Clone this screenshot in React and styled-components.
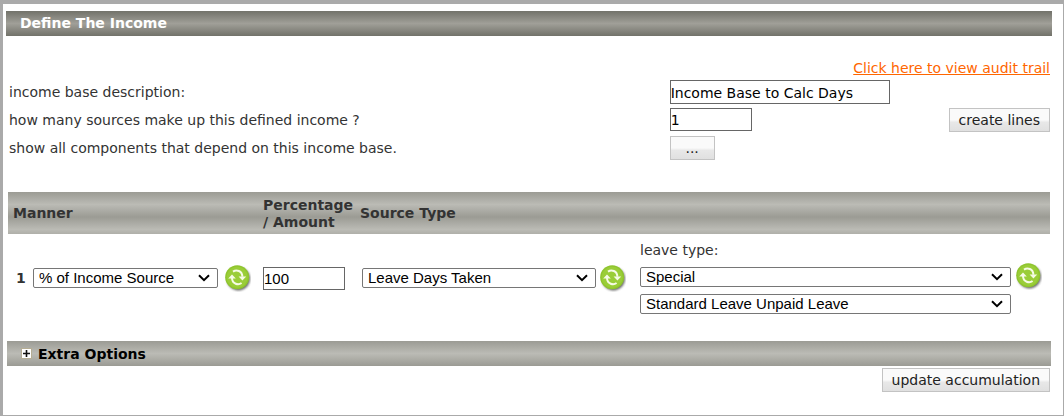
import React, { useState } from 'react'
import styled, { createGlobalStyle, css } from 'styled-components'

function RefreshButton({ label }) {
  return (
    <IconButton type="button" aria-label={label}>
      <svg width="26" height="27" viewBox="0 0 26 27" aria-hidden="true">
        <defs>
          <filter id="iconShadow" x="-20%" y="-20%" width="150%" height="150%">
            <feGaussianBlur stdDeviation="0.8" />
          </filter>
        </defs>
        <circle cx="13.4" cy="13.8" r="11.6" fill="#444" opacity="0.8" filter="url(#iconShadow)" />
        <circle cx="12.2" cy="12.3" r="12" fill="#8fc52e" />
        <circle cx="12.2" cy="12.3" r="10.6" fill="#9acd38" />
        <g fill="none" stroke="#f6fbe6" strokeWidth="2">
          <path d="M8 6.6C11.4 4.2 17.2 5.6 17.4 11.8" />
          <path d="M16.6 18C13.4 20.4 7.2 19.2 7 13" />
        </g>
        <path d="M13.6 11.4H21.2L17.4 15.4Z" fill="#f6fbe6" />
        <path d="M3.2 13.4H10.8L7 9.4Z" fill="#f6fbe6" />
      </svg>
    </IconButton>
  )
}

export default function App() {
  const [description, setDescription] = useState('Income Base to Calc Days')
  const [sources, setSources] = useState('1')
  const [amount, setAmount] = useState('100')

  return (
    <>
      <GlobalStyle />
      <Page>
        <TitleBar>Define The Income</TitleBar>

        <Content>
          <AuditRow>
            <AuditLink href="#audit">Click here to view audit trail</AuditLink>
          </AuditRow>

          <FormRow>
            <FormLabel htmlFor="description">income base description:</FormLabel>
            <TextInput
              id="description"
              $width="220px"
              $tall
              value={description}
              onChange={(e) => setDescription(e.target.value)}
            />
          </FormRow>
          <FormRow>
            <FormLabel htmlFor="sources">how many sources make up this defined income ?</FormLabel>
            <TextInput id="sources" value={sources} onChange={(e) => setSources(e.target.value)} />
            <Button type="button">create lines</Button>
          </FormRow>
          <FormRow>
            <FormLabel htmlFor="dependents">show all components that depend on this income base.</FormLabel>
            <Button id="dependents" type="button" $small>...</Button>
          </FormRow>

          <SourceTable>
            <colgroup>
              <Column $width="255px" />
              <Column $width="97px" />
              <Column $width="280px" />
              <Column />
            </colgroup>
            <thead>
              <tr>
                <HeadCell $first>Manner</HeadCell>
                <HeadCell>Percentage / Amount</HeadCell>
                <HeadCell>Source Type</HeadCell>
                <HeadCell />
              </tr>
            </thead>
            <tbody>
              <tr>
                <Cell>
                  <MannerLine>
                    <LineNumber>1</LineNumber>
                    <Select aria-label="Manner">
                      <option>% of Income Source</option>
                    </Select>
                    <RefreshButton label="Refresh manner" />
                  </MannerLine>
                </Cell>
                <Cell>
                  <TextInput
                    aria-label="Percentage / Amount"
                    $arial
                    value={amount}
                    onChange={(e) => setAmount(e.target.value)}
                  />
                </Cell>
                <Cell>
                  <SourceLine>
                    <Select aria-label="Source Type">
                      <option>Leave Days Taken</option>
                    </Select>
                    <RefreshButton label="Refresh source type" />
                  </SourceLine>
                </Cell>
                <Cell>
                  <LeaveGrid>
                    <LeaveLabel htmlFor="leaveType">leave type:</LeaveLabel>
                    <Select id="leaveType">
                      <option>Special</option>
                    </Select>
                    <RefreshButton label="Refresh leave type" />
                    <Select aria-label="Leave">
                      <option>Standard Leave Unpaid Leave</option>
                    </Select>
                  </LeaveGrid>
                </Cell>
              </tr>
            </tbody>
          </SourceTable>
        </Content>

        <Extra>
          <ExtraBar type="button">
            <Plus width="11" height="11" viewBox="0 0 11 11" aria-hidden="true">
              <rect x="0.5" y="0.5" width="10" height="10" fill="#fff" stroke="#b5ad94" />
              <path d="M2 5.5H9M5.5 2V9" stroke="#111" strokeWidth="1.6" />
            </Plus>
            Extra Options
          </ExtraBar>
          <Footer>
            <Button type="button">update accumulation</Button>
          </Footer>
        </Extra>
      </Page>
    </>
  )
}

const GlobalStyle = createGlobalStyle`
  * {
    box-sizing: border-box;
  }
  body {
    margin: 0;
    background: #fff;
    color: #333;
    font-family: "DejaVu Sans", Verdana, sans-serif;
    font-size: 14px;
    line-height: 17px;
  }
`

const bar = css`
  background-image: linear-gradient(#9b9b94, #bbbbb5 50%, #9b9b94);
  background-size: 100% 25px;
`

const chevron = `url("data:image/svg+xml,%3Csvg xmlns='http://www.w3.org/2000/svg' width='12' height='8'%3E%3Cpath d='M1 1.2L6 6.2L11 1.2' fill='none' stroke='%23000' stroke-width='2'/%3E%3C/svg%3E")`

const Page = styled.div`
  min-height: 100vh;
  padding: 7px 11px 23px 3px;
  border: solid #aaa;
  border-width: 4px 1px 1px 3px;
`

const TitleBar = styled.h1`
  height: 25px;
  margin: 0;
  padding-left: 14px;
  background: linear-gradient(#72726a, #a09f98 50%, #72726a);
  color: #fff;
  font-size: 14px;
  line-height: 25px;
`

const Content = styled.div`
  padding: 24px 2px 0;
`

const AuditRow = styled.div`
  display: flex;
  justify-content: flex-end;
  margin-bottom: 3px;
`

const AuditLink = styled.a`
  color: #f60;
`

const FormRow = styled.div`
  display: grid;
  grid-template-columns: 635fr 265fr 100fr;
  align-items: start;
  height: 24px;
  margin-bottom: 4px;

  button:nth-child(3) {
    justify-self: end;
  }
`

const FormLabel = styled.label`
  padding-left: 1px;
  line-height: 25px;
`

const TextInput = styled.input`
  display: block;
  width: ${({ $width }) => $width || '82px'};
  height: ${({ $tall }) => ($tall ? '24px' : '23px')};
  padding: 1px 0 0;
  border: 1px solid #666;
  background: #fff;
  color: #000;
  font-family: ${({ $arial }) => ($arial ? '"Liberation Sans", Arial, sans-serif' : 'inherit')};
  font-size: ${({ $arial }) => ($arial ? '15px' : '14px')};
`

const Button = styled.button`
  width: ${({ $small }) => ($small ? '45px' : 'auto')};
  height: 24px;
  padding: 0 9px;
  border: 1px solid #c3c3c3;
  background: linear-gradient(#fafafa 50%, #e8e8e8 60%, #e0e0e0);
  color: #222;
  font-family: inherit;
  font-size: 14px;
  white-space: nowrap;
  cursor: pointer;
`

const IconButton = styled.button`
  display: flex;
  flex: none;
  padding: 0;
  border: 0;
  background: none;
  cursor: pointer;
`

const SourceTable = styled.table`
  width: 100%;
  margin-top: 32px;
  border-collapse: collapse;
  table-layout: fixed;

  thead tr {
    ${bar}
  }
`

const Column = styled.col`
  width: ${({ $width }) => $width || 'auto'};
`

const HeadCell = styled.th`
  height: 42px;
  padding: 1px 0 0 ${({ $first }) => ($first ? '5px' : '0')};
  text-align: left;
`

const Cell = styled.td`
  height: 88px;
  padding: 0;
`

const MannerLine = styled.div`
  display: flex;
  align-items: center;
  gap: 7px;
  padding: 0 12px 0 8px;
`

const SourceLine = styled.div`
  display: flex;
  align-items: center;
  gap: 4px;
  padding: 0 14px 0 2px;
`

const LineNumber = styled.b`
  width: 10px;
`

const Select = styled.select`
  flex: 1;
  min-width: 0;
  width: 100%;
  height: 20px;
  padding: 0 24px 0 5px;
  border: 1px solid #767676;
  border-radius: 2px;
  appearance: none;
  background: #fff ${chevron} no-repeat right 7px center;
  color: #000;
  font-family: "Liberation Sans", Arial, sans-serif;
  font-size: 15px;
  line-height: 18px;
`

const LeaveGrid = styled.div`
  display: grid;
  grid-template-columns: 1fr 26px;
  align-items: center;
  gap: 4px 5px;
  padding-right: 8px;
`

const LeaveLabel = styled.label`
  grid-column: 1 / -1;
`

const Extra = styled.div`
  margin-top: 19px;
  padding: 0 1px;
`

const ExtraBar = styled.button`
  display: flex;
  align-items: center;
  gap: 6px;
  width: 100%;
  height: 25px;
  padding: 0 0 0 14px;
  border: 0;
  ${bar}
  color: #000;
  font-family: inherit;
  font-size: 14px;
  font-weight: bold;
  cursor: pointer;
`

const Plus = styled.svg`
  flex: none;
`

const Footer = styled.div`
  display: flex;
  justify-content: flex-end;
  padding: 2px 1px 0;
`
